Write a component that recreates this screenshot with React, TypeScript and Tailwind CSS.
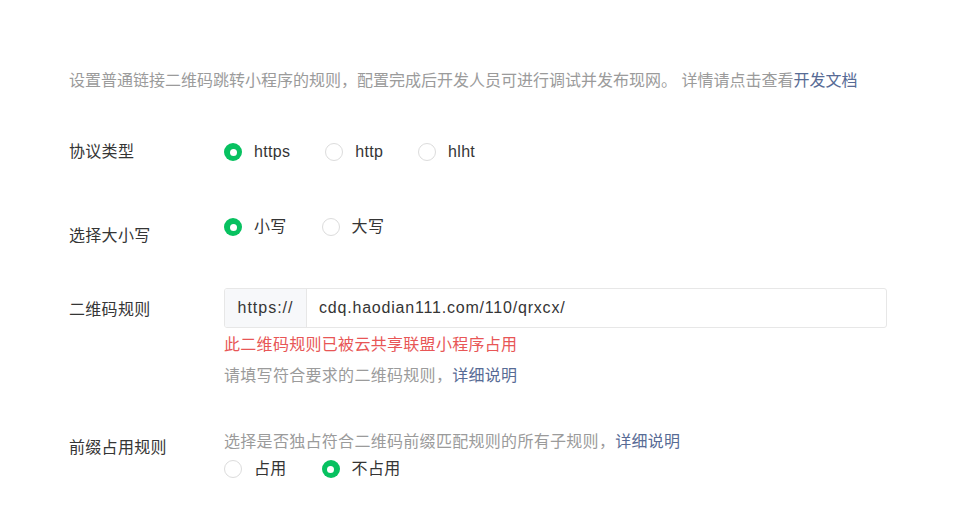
import React, { useState } from 'react'

const font = { fontFamily: '"Liberation Sans", "Noto Sans CJK SC", sans-serif' }

function Radio({ checked, label, onClick }: { checked: boolean; label: string; onClick: () => void }) {
  return (
    <label className="flex items-center cursor-pointer" onClick={onClick}>
      {checked ? (
        <span className="w-[18px] h-[18px] rounded-full bg-[#07c160] flex items-center justify-center">
          <span className="w-[7px] h-[7px] rounded-full bg-white" />
        </span>
      ) : (
        <span className="w-[18px] h-[18px] rounded-full border border-[#dcdcdc] bg-white" />
      )}
      <span className="ml-3 text-[#353535]">{label}</span>
    </label>
  )
}

function RadioGroup({ options, value, onChange }: { options: string[]; value: string; onChange: (v: string) => void }) {
  return (
    <div className="flex items-center gap-[35px] h-6">
      {options.map(o => (
        <Radio key={o} label={o} checked={value === o} onClick={() => onChange(o)} />
      ))}
    </div>
  )
}

export default function App() {
  const [protocol, setProtocol] = useState('https')
  const [caseType, setCaseType] = useState('小写')
  const [occupy, setOccupy] = useState('不占用')

  return (
    <div className="bg-white min-h-[505px] pl-[69px] pt-[69px] text-[16px] leading-6 tracking-[0.3px]" style={font}>
      {/* Description */}
      <p className="text-[#9b9b9b] tracking-normal">
        设置普通链接二维码跳转小程序的规则，配置完成后开发人员可进行调试并发布现网。 详情请点击查看
        <a className="text-[#576b95]">开发文档</a>
      </p>

      {/* 协议类型 */}
      <div className="flex mt-[47px]">
        <div className="w-[155px] text-[#353535]">协议类型</div>
        <RadioGroup options={['https', 'http', 'hlht']} value={protocol} onChange={setProtocol} />
      </div>

      {/* 选择大小写 */}
      <div className="flex items-start mt-[51px]">
        <div className="w-[155px] mt-[9px] text-[#353535]">选择大小写</div>
        <RadioGroup options={['小写', '大写']} value={caseType} onChange={setCaseType} />
      </div>

      {/* 二维码规则 */}
      <div className="flex items-start mt-[40px]">
        <div className="w-[155px] mt-[10px] text-[#353535]">二维码规则</div>
        <div>
          <div className="flex w-[663px] h-10 border border-[#e7e7e7] rounded-[3px] overflow-hidden">
            <div className="w-[82px] bg-[#f7f8fa] border-r border-[#e7e7e7] flex items-center justify-center text-[#353535] tracking-[1px]">
              https://
            </div>
            <input
              className="flex-1 px-3 outline-none text-[#353535] tracking-[0.8px]"
              defaultValue="cdq.haodian111.com/110/qrxcx/"
              style={font}
            />
          </div>
          <div className="mt-[5px] text-[#e85656]">此二维码规则已被云共享联盟小程序占用</div>
          <div className="mt-[7px] text-[#9b9b9b]">
            请填写符合要求的二维码规则，<a className="text-[#576b95]">详细说明</a>
          </div>
        </div>
      </div>

      {/* 前缀占用规则 */}
      <div className="flex items-start mt-[42px]">
        <div className="w-[155px] mt-[6px] text-[#353535]">前缀占用规则</div>
        <div>
          <div className="text-[#9b9b9b]">
            选择是否独占符合二维码前缀匹配规则的所有子规则，
            <a className="text-[#576b95]">详细说明</a>
          </div>
          <div className="mt-[3px]">
            <RadioGroup options={['占用', '不占用']} value={occupy} onChange={setOccupy} />
          </div>
        </div>
      </div>
    </div>
  )
}
